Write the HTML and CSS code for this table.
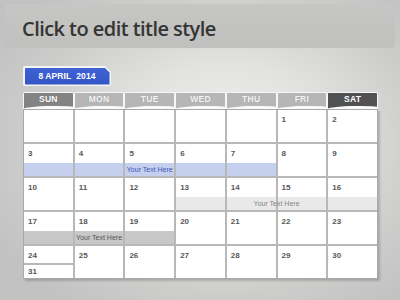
FILE: index.html
```html
<!DOCTYPE html>
<html>
<head>
<meta charset="utf-8">
<link rel="stylesheet" href="styles.css">
</head>
<body>
<div class="slide">
  <div class="title-box"><h1 class="title">Click to edit title style</h1></div>
  <div class="badge"><div class="badge-inner">8 APRIL&nbsp; 2014</div></div>
  <div class="calendar">
    <div class="heads">
      <div class="head sun">SUN</div>
      <div class="head wk">MON</div>
      <div class="head wk">TUE</div>
      <div class="head wk">WED</div>
      <div class="head wk">THU</div>
      <div class="head wk">FRI</div>
      <div class="head sat">SAT</div>
    </div>
    <div class="board">
      <div class="grid">
        <div class="cell"></div><div class="cell"></div><div class="cell"></div><div class="cell"></div><div class="cell"></div>
        <div class="cell"><span class="num">1</span></div>
        <div class="cell"><span class="num">2</span></div>

        <div class="cell"><span class="num">3</span><span class="bar blue"></span></div>
        <div class="cell"><span class="num">4</span><span class="bar blue"></span></div>
        <div class="cell"><span class="num">5</span><span class="bar blue"></span></div>
        <div class="cell"><span class="num">6</span><span class="bar blue"></span></div>
        <div class="cell"><span class="num">7</span><span class="bar blue"></span></div>
        <div class="cell"><span class="num">8</span></div>
        <div class="cell"><span class="num">9</span></div>

        <div class="cell"><span class="num">10</span></div>
        <div class="cell"><span class="num">11</span></div>
        <div class="cell"><span class="num">12</span></div>
        <div class="cell"><span class="num">13</span><span class="bar light"></span></div>
        <div class="cell"><span class="num">14</span><span class="bar light"></span></div>
        <div class="cell"><span class="num">15</span><span class="bar light"></span></div>
        <div class="cell"><span class="num">16</span><span class="bar light"></span></div>

        <div class="cell"><span class="num">17</span><span class="bar dark"></span></div>
        <div class="cell"><span class="num">18</span><span class="bar dark"></span></div>
        <div class="cell"><span class="num">19</span><span class="bar dark"></span></div>
        <div class="cell"><span class="num">20</span></div>
        <div class="cell"><span class="num">21</span></div>
        <div class="cell"><span class="num">22</span></div>
        <div class="cell"><span class="num">23</span></div>

        <div class="cell split"><div class="sub"><span class="num">24</span></div><div class="sub low"><span class="num">31</span></div></div>
        <div class="cell"><span class="num">25</span></div>
        <div class="cell"><span class="num">26</span></div>
        <div class="cell"><span class="num">27</span></div>
        <div class="cell"><span class="num">28</span></div>
        <div class="cell"><span class="num">29</span></div>
        <div class="cell"><span class="num">30</span></div>
      </div>
      <div class="overlay">
        <div class="ev ev-blue">Your Text Here</div>
        <div class="ev ev-light">Your Text Here</div>
        <div class="ev ev-dark">Your Text Here</div>
      </div>
    </div>
  </div>
</div>
</body>
</html>
```
FILE: styles.css
```css
html, body {
  margin: 0;
  padding: 0;
}
body {
  width: 400px;
  height: 300px;
  overflow: hidden;
  background: radial-gradient(ellipse 260px 200px at 56% 48%, #f1f1ef 0%, #e2e2e1 40%, #cdcdcc 75%, #c2c2c2 100%);
  font-family: "Liberation Sans", Arial, sans-serif;
}
.slide {
  padding: 4px 5px 0 5px;
}
.title-box {
  height: 44px;
  box-sizing: border-box;
  border-radius: 4px;
  background: linear-gradient(180deg, #c6c6c5 0%, #c0c0bf 100%);
  display: flex;
  align-items: center;
  padding: 4px 0 0 17px;
}
.title {
  margin: 0;
  font-family: "Open Sans", "Noto Sans", sans-serif;
  font-weight: 600;
  font-size: 20px;
  color: #343434;
  letter-spacing: -0.55px;
}
.badge {
  margin: 18px 0 0 18px;
  width: 88px;
  height: 20px;
  background: #f4f4f4;
  clip-path: polygon(0 0, calc(100% - 6px) 0, 100% 6px, 100% 100%, 0 100%);
  padding: 1.5px;
  box-sizing: border-box;
  border-radius: 2px;
}
.badge-inner {
  height: 100%;
  background: linear-gradient(180deg, #3f62d4 0%, #3455c6 100%);
  clip-path: polygon(0 0, calc(100% - 5px) 0, 100% 5px, 100% 100%, 0 100%);
  color: #fff;
  font-weight: bold;
  font-size: 8.5px;
  display: flex;
  align-items: center;
  justify-content: center;
  letter-spacing: 0.1px;
  border-radius: 1px;
}
.calendar {
  margin: 6px 0 0 18px;
  width: 355px;
}
.heads {
  display: grid;
  grid-template-columns: repeat(7, 1fr);
  height: 17px;
}
.head {
  box-sizing: border-box;
  border: 1px solid #f6f6f6;
  border-bottom: none;
  border-radius: 2px 2px 0 0;
  color: #fff;
  font-weight: bold;
  font-size: 8.5px;
  text-align: center;
  line-height: 13px;
  letter-spacing: 0.3px;
  position: relative;
  overflow: hidden;
}
.head::after {
  content: "";
  position: absolute;
  left: -10%;
  right: -10%;
  bottom: -9px;
  height: 12px;
  background: #fafafa;
  border-radius: 50% 60% 0 0 / 40% 25% 0 0;
  transform: rotate(-1.5deg);
}
.sun { background: #838383; text-shadow: 0 0 1px #666; }
.wk { background: #b6b6b6; color: #f4f4f4; text-shadow: 0 0 1px #999; }
.sat { background: #515151; }
.board {
  display: grid;
}
.grid, .overlay {
  grid-area: 1 / 1;
  display: grid;
  grid-template-columns: repeat(7, 1fr);
  grid-template-rows: repeat(5, 32px);
  gap: 2px;
  border: 1px solid #a9a9a9;
}
.grid {
  background: #b8b8b8;
  box-shadow: 2px 2px 2px rgba(0,0,0,0.18);
}
.overlay {
  border-color: transparent;
  pointer-events: none;
}
.cell {
  background: #fff;
  display: flex;
  flex-direction: column;
  min-width: 0;
}
.num {
  display: block;
  font-weight: bold;
  font-size: 8px;
  color: #575757;
  padding: 5px 0 0 4px;
  line-height: 10px;
}
.bar {
  margin-top: auto;
  height: 13px;
}
.blue { background: #c5cfee; }
.light { background: #e9e9e9; }
.dark { background: #c8c8c8; }
.split .sub {
  height: 17px;
}
.split .sub.low {
  border-top: 2px solid #b8b8b8;
  height: 13px;
}
.split .sub.low .num {
  padding-top: 2px;
}
.ev {
  align-self: end;
  height: 13px;
  line-height: 13px;
  font-size: 7px;
  text-align: center;
  white-space: nowrap;
}
.ev-blue { grid-row: 2; grid-column: 1 / 6; color: #3c56b4; }
.ev-light { grid-row: 3; grid-column: 4 / 8; color: #858585; }
.ev-dark { grid-row: 4; grid-column: 1 / 4; color: #555; }
```
